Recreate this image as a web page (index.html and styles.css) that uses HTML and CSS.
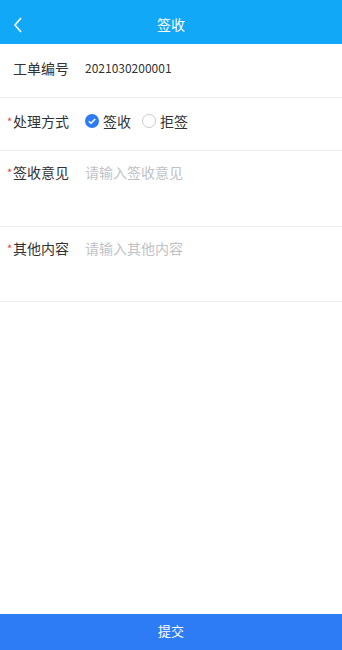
FILE: index.html
```html
<!DOCTYPE html>
<html lang="zh">
<head>
  <meta charset="UTF-8">
  <title>签收</title>
  <link rel="stylesheet" href="styles.css">
</head>
<body>
  <div class="page">
    <div class="navBar">
      <span class="navBack">
        <svg width="10" height="16" viewBox="0 0 10 16"><path d="M8 1 L2 8 L8 15" fill="none" stroke="#fff" stroke-width="1.6"/></svg>
      </span>
      <h1 class="navTitle">签收</h1>
    </div>

    <div class="form">
      <div class="formRow">
        <span class="label">工单编号</span>
        <span class="value">2021030200001</span>
      </div>
      <div class="formRow">
        <span class="label"><i class="req">*</i>处理方式</span>
        <div class="radios">
          <span class="radio checked">
            <svg width="14" height="14" viewBox="0 0 14 14"><circle cx="7" cy="7" r="7" fill="#2d7cf6"/><path d="M3.8 7.2 L6 9.3 L10.2 4.9" fill="none" stroke="#fff" stroke-width="1.5"/></svg>
            签收
          </span>
          <span class="radio">
            <svg width="14" height="14" viewBox="0 0 14 14"><circle cx="7" cy="7" r="6.5" fill="#fff" stroke="#c8c9cc" stroke-width="1"/></svg>
            拒签
          </span>
        </div>
      </div>
      <div class="formRow tall">
        <span class="label"><i class="req">*</i>签收意见</span>
        <span class="placeholder">请输入签收意见</span>
      </div>
      <div class="formRow tall">
        <span class="label"><i class="req">*</i>其他内容</span>
        <span class="placeholder">请输入其他内容</span>
      </div>
    </div>

    <div class="submit">提交</div>
  </div>
</body>
</html>
```

FILE: styles.css
```css
body, html {
  margin: 0;
  padding: 0;
  height: 100%;
  font-family: "Noto Sans CJK SC", "Noto Sans", sans-serif;
  background: #fff;
}

.page {
  display: flex;
  flex-direction: column;
  height: 100%;
}

.navBar {
  height: 44px;
  background: #12a8f8;
  display: flex;
  align-items: center;
  justify-content: center;
  position: relative;
}

.navBack {
  position: absolute;
  left: 13px;
  top: 17px;
  line-height: 0;
}

.navTitle {
  margin: 0;
  color: #fff;
  font-size: 14px;
  font-weight: normal;
  padding-top: 4px;
}

.form {
  flex: 1;
}

.formRow {
  display: flex;
  align-items: center;
  box-sizing: border-box;
  height: 53px;
  padding-bottom: 6px;
  border-bottom: 1px solid #ebedf0;
  font-size: 14px;
  color: #323233;
}

.formRow:first-child {
  height: 54px;
}

.formRow.tall {
  height: 76px;
  padding-bottom: 0;
  align-items: flex-start;
}

.formRow.tall + .formRow.tall {
  height: 75px;
}

.formRow.tall .label,
.formRow.tall .placeholder {
  margin-top: 11px;
}

.label {
  width: 72px;
  padding-left: 13px;
  position: relative;
  flex-shrink: 0;
}

.req {
  position: absolute;
  left: 7px;
  top: 2px;
  color: #e23c3c;
  font-style: normal;
  font-size: 11px;
}

.value {
  font-size: 12px;
}

.placeholder {
  color: #c0c2c6;
  font-size: 14px;
}

.radios {
  display: flex;
  align-items: center;
}

.radio {
  display: flex;
  align-items: center;
  gap: 4px;
  margin-right: 11px;
}

.radio svg {
  display: block;
}

.submit {
  height: 36px;
  background: #2d7cf6;
  color: #fff;
  font-size: 13px;
  display: flex;
  align-items: center;
  justify-content: center;
  padding-bottom: 3px;
  box-sizing: border-box;
}
```
